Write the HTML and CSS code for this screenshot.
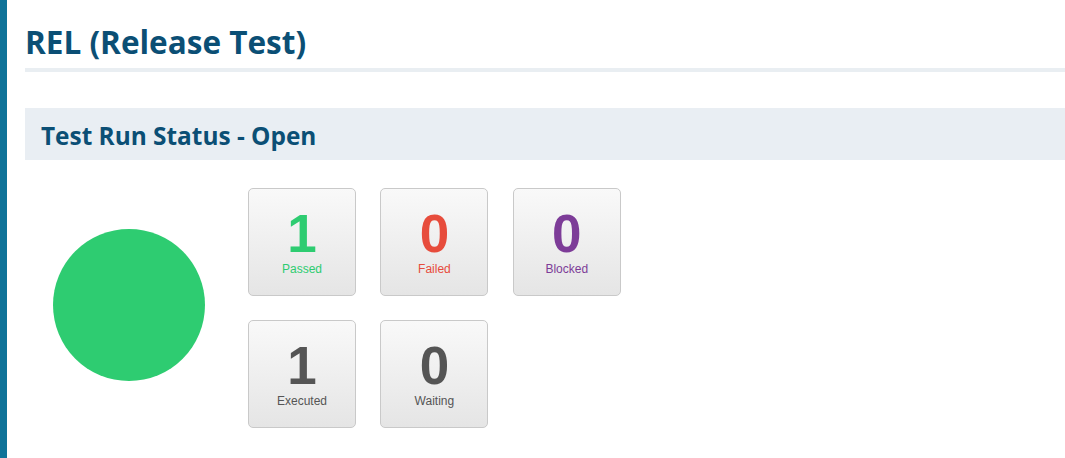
FILE: index.html
```html
<!DOCTYPE html>
<html>
<head>
<meta charset="utf-8">
<link rel="stylesheet" href="styles.css">
</head>
<body>
<div class="page">
  <h1 class="title">REL (Release Test)</h1>
  <div class="section-head">Test Run Status - Open</div>
  <div class="status">
    <div class="pie"></div>
    <div class="cards">
      <div class="card"><div class="num green">1</div><div class="lbl green">Passed</div></div>
      <div class="card"><div class="num red">0</div><div class="lbl red">Failed</div></div>
      <div class="card"><div class="num purple">0</div><div class="lbl purple">Blocked</div></div>
      <div class="card"><div class="num gray">1</div><div class="lbl gray">Executed</div></div>
      <div class="card"><div class="num gray">0</div><div class="lbl gray">Waiting</div></div>
    </div>
  </div>
</div>
</body>
</html>
```
FILE: styles.css
```css
html, body {
  margin: 0;
  padding: 0;
  background: #fff;
}
body {
  height: 458px;
  overflow: hidden;
  border-left: 7px solid #0f7399;
  box-sizing: border-box;
}
.page {
  padding-left: 18px;
  padding-top: 22px;
}
.title {
  margin: 0;
  font-family: "Open Sans", sans-serif;
  font-weight: 700;
  font-size: 31.5px;
  line-height: 40px;
  color: #0b4f75;
  padding-bottom: 6px;
  border-bottom: 4px solid #e9eef2;
}
.section-head {
  margin-top: 36px;
  height: 52px;
  background: #e9eef3;
  font-family: "Open Sans", sans-serif;
  font-weight: 700;
  font-size: 24.4px;
  line-height: 56px;
  color: #0b4f75;
  padding-left: 16px;
}
.status {
  display: flex;
  padding-top: 28px;
}
.pie {
  width: 152px;
  height: 152px;
  border-radius: 50%;
  background: #2ecc71;
  margin-left: 28px;
  margin-top: 41px;
}
.cards {
  margin-left: 43px;
  display: grid;
  grid-template-columns: repeat(3, 108px);
  grid-auto-rows: 108px;
  column-gap: 24.4px;
  row-gap: 24px;
}
.card {
  box-sizing: border-box;
  border: 1px solid #c9c9c9;
  border-radius: 5px;
  background: linear-gradient(#f9f9f9, #e5e5e5);
  display: flex;
  flex-direction: column;
  align-items: center;
  font-family: "Liberation Sans", Arial, sans-serif;
}
.num {
  font-weight: 700;
  font-size: 53px;
  line-height: 54px;
  margin-top: 18px;
}
.lbl {
  font-size: 12px;
  line-height: 14px;
  margin-top: 1px;
}
.green { color: #2ecc71; }
.red { color: #e74c3c; }
.purple { color: #7d3c98; }
.gray { color: #555; }
```
